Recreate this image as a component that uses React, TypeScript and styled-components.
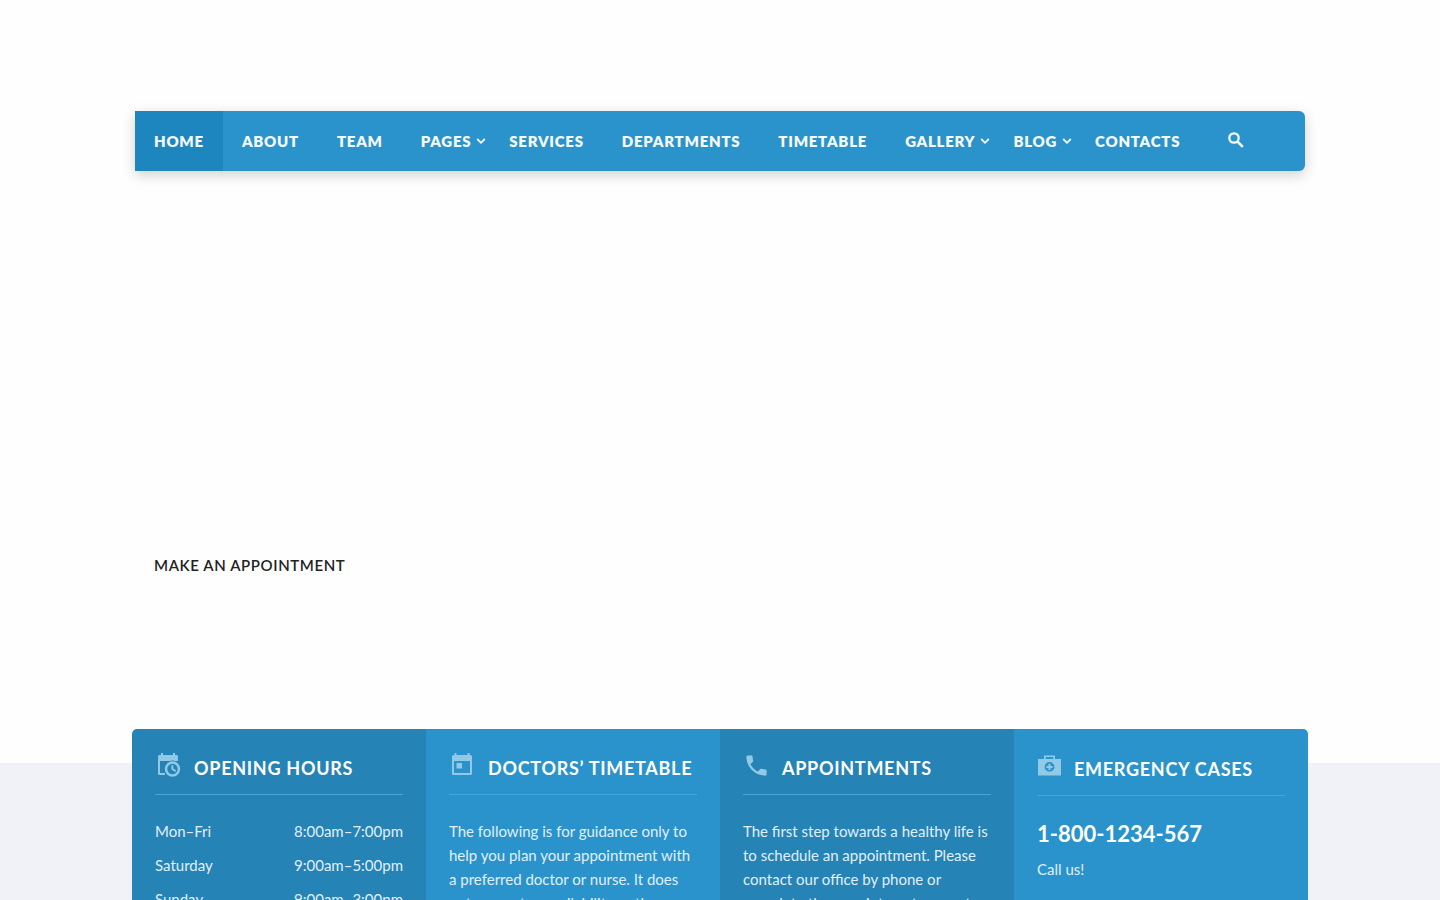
import React from "react";
import styled, { createGlobalStyle } from "styled-components";

const GlobalStyle = createGlobalStyle`
  *, *::before, *::after { box-sizing: border-box; }
  body {
    margin: 0;
    background: #fefefe;
    font-family: Lato, "Liberation Sans", sans-serif;
    font-size: 15px;
    line-height: 24px;
    color: #222;
  }
`;

const Page = styled.div`
  min-height: 100vh;
  display: flex;
  flex-direction: column;
`;

const Header = styled.header`
  padding: 111px 24px 0;
`;

const Nav = styled.nav`
  display: flex;
  max-width: 1170px;
  height: 60px;
  margin: 0 auto;
  background: #2a93cb;
  border-radius: 0 6px 6px 0;
  box-shadow: 0 4px 14px rgba(0, 0, 0, 0.18);
`;

const NavLink = styled.a<{ $active?: boolean; $menu?: boolean }>`
  display: flex;
  align-items: center;
  gap: 5px;
  padding: 0 ${(p) => (p.$menu ? 4 : 19)}px 0 19px;
  background: ${(p) => (p.$active ? "#1e86be" : "transparent")};
  color: #f6fbfe;
  font-size: 15px;
  font-weight: 800;
  letter-spacing: 0.05em;
  text-decoration: none;
  white-space: nowrap;
`;

const SearchButton = styled.button`
  display: flex;
  align-items: center;
  padding: 0 0 2px;
  margin-left: 26px;
  border: 0;
  background: none;
  color: #f6fbfe;
  cursor: pointer;
`;

const Hero = styled.section`
  flex: 0 0 558px;
  padding: 382px 24px 0;
`;

const HeroInner = styled.div`
  max-width: 1132px;
  margin: 0 auto;
`;

const HeroLink = styled.a`
  color: #222;
  font-size: 15px;
  font-weight: 600;
  letter-spacing: 0.04em;
  text-decoration: none;
`;

const InfoBand = styled.section`
  flex: 1;
  padding: 0 24px;
  background: linear-gradient(#fefefe 34px, #f1f2f7 34px);
`;

const Cards = styled.div`
  display: grid;
  grid-template-columns: repeat(4, 1fr);
  max-width: 1176px;
  margin: 0 auto;
  border-radius: 5px;
  overflow: hidden;
`;

const Card = styled.article<{ $dark?: boolean; $lowered?: boolean }>`
  padding: ${(p) => (p.$lowered ? 21 : 20)}px 23px 30px;
  background: ${(p) => (p.$dark ? "#2583b5" : "#2a93cb")};
  color: #e0eff8;
`;

const CardHead = styled.div`
  display: flex;
  align-items: center;
  gap: 12px;
  height: 46px;
  padding-bottom: 12px;
  border-bottom: 1px solid #46a5da;
  margin-bottom: 24px;
`;

const CardTitle = styled.h2`
  margin: 0;
  padding-top: 4px;
  color: #fff;
  font-size: 18px;
  line-height: 24px;
  font-weight: 700;
  letter-spacing: 0.04em;
  white-space: nowrap;
`;

const Icon = styled.svg`
  flex: none;
  fill: #92c9e5;
`;

const CardText = styled.p`
  margin: 0;
`;

const Hours = styled.table`
  width: 100%;
  border-collapse: collapse;
`;

const HoursRow = styled.tr`
  height: 34px;
  vertical-align: top;
`;

const Day = styled.th`
  padding: 0;
  font-weight: 400;
  text-align: left;
`;

const Time = styled.td`
  padding: 0;
  text-align: right;
`;

const Phone = styled.p`
  margin: 0 0 9px;
  color: #fff;
  font-size: 22px;
  line-height: 28px;
  font-weight: 700;
`;

const navItems = [
  { label: "HOME", active: true },
  { label: "ABOUT" },
  { label: "TEAM" },
  { label: "PAGES", menu: true },
  { label: "SERVICES" },
  { label: "DEPARTMENTS" },
  { label: "TIMETABLE" },
  { label: "GALLERY", menu: true },
  { label: "BLOG", menu: true },
  { label: "CONTACTS" },
];

const hours = [
  ["Mon–Fri", "8:00am–7:00pm"],
  ["Saturday", "9:00am–5:00pm"],
  ["Sunday", "9:00am–3:00pm"],
];

const Chevron = () => (
  <svg width="10" height="10" viewBox="0 0 10 10" fill="none" stroke="currentColor" strokeWidth="1.800" aria-hidden="true">
    <path d="M1.200 3 5 6.800 8.800 3" />
  </svg>
);

export default function App() {
  return (
    <Page>
      <GlobalStyle />
      <Header>
        <Nav aria-label="Main">
          {navItems.map((item) => (
            <NavLink key={item.label} href="#" $active={item.active} $menu={item.menu}>
              {item.label}
              {item.menu && <Chevron />}
            </NavLink>
          ))}
          <SearchButton type="button" aria-label="Search">
            <svg width="22" height="22" viewBox="0 0 22 22" fill="none" stroke="currentColor" aria-hidden="true">
              <circle cx="9" cy="9" r="4.700" strokeWidth="2.300" />
              <path d="M12.300 12.300 17.800 17.800" strokeWidth="2.600" />
            </svg>
          </SearchButton>
        </Nav>
      </Header>
      <Hero>
        <HeroInner>
          <HeroLink href="#">MAKE AN APPOINTMENT</HeroLink>
        </HeroInner>
      </Hero>
      <InfoBand>
        <Cards>
          <Card $dark>
            <CardHead>
              <Icon width="27" height="27" viewBox="0 0 27 27" aria-hidden="true">
                <path d="M6 1h2v2h10V1h2v2h1.500A1.500 1.500 0 0 1 23 4.500V9H5v12h5v2H4.500A1.500 1.500 0 0 1 3 21.500v-17A1.500 1.500 0 0 1 4.500 3H6z" />
                <circle cx="17.500" cy="17" r="8.500" fill="#2583b5" />
                <path fillRule="evenodd" d="M17.500 9.300a7.700 7.700 0 1 0 0 15.400 7.700 7.700 0 0 0 0-15.400zm0 2.500a5.200 5.200 0 1 1 0 10.400 5.200 5.200 0 0 1 0-10.400z" />
                <path d="M16.400 13.200h1.900v3.400l2.900 1.700-.9 1.600-3.900-2.300z" />
              </Icon>
              <CardTitle>OPENING HOURS</CardTitle>
            </CardHead>
            <Hours>
              <tbody>
                {hours.map(([day, time]) => (
                  <HoursRow key={day}>
                    <Day scope="row">{day}</Day>
                    <Time>{time}</Time>
                  </HoursRow>
                ))}
              </tbody>
            </Hours>
          </Card>
          <Card>
            <CardHead>
              <Icon width="27" height="27" viewBox="0 0 27 27" aria-hidden="true">
                <path fillRule="evenodd" d="M5.500 1h2v2h11V1h2v2H21.500A1.500 1.500 0 0 1 23 4.500v17a1.500 1.500 0 0 1-1.500 1.500h-17A1.500 1.500 0 0 1 3 21.500v-17A1.500 1.500 0 0 1 4.500 3h1zM5 9v12h16V9zM7.500 11H13v5.500H7.500z" />
              </Icon>
              <CardTitle>DOCTORS’ TIMETABLE</CardTitle>
            </CardHead>
            <CardText>
              The following is for guidance only to help you plan your appointment with a preferred doctor or nurse. It
              does not guarantee availability as the
            </CardText>
          </Card>
          <Card $dark>
            <CardHead>
              <Icon width="27" height="27" viewBox="0 0 24 24" aria-hidden="true">
                <path d="M6.620 10.790c1.440 2.830 3.760 5.140 6.590 6.590l2.200-2.200c.27-.27.67-.36 1.020-.24 1.120.37 2.330.57 3.570.57.55 0 1 .45 1 1V20c0 .55-.45 1-1 1-9.390 0-17-7.610-17-17 0-.55.45-1 1-1h3.500c.55 0 1 .45 1 1 0 1.250.2 2.450.57 3.570.11.35.03.74-.25 1.020l-2.200 2.200z" />
              </Icon>
              <CardTitle>APPOINTMENTS</CardTitle>
            </CardHead>
            <CardText>
              The first step towards a healthy life is to schedule an appointment. Please contact our office by phone
              or complete the appointment request
            </CardText>
          </Card>
          <Card $lowered>
            <CardHead>
              <Icon width="25" height="25" viewBox="0 0 25 25" aria-hidden="true">
                <path fillRule="evenodd" d="M7 1.500h11V5h6v16.500H1V5h6zM8.700 3v2h7.600V3zM12.500 8a4.900 4.900 0 1 0 0 9.800 4.900 4.900 0 0 0 0-9.800z" />
                <path d="M11.500 9.800h2v2.100h2.100v2h-2.100V16h-2v-2.100H9.400v-2h2.100z" />
              </Icon>
              <CardTitle>EMERGENCY CASES</CardTitle>
            </CardHead>
            <Phone>1-800-1234-567</Phone>
            <CardText>Call us!</CardText>
          </Card>
        </Cards>
      </InfoBand>
    </Page>
  );
}
